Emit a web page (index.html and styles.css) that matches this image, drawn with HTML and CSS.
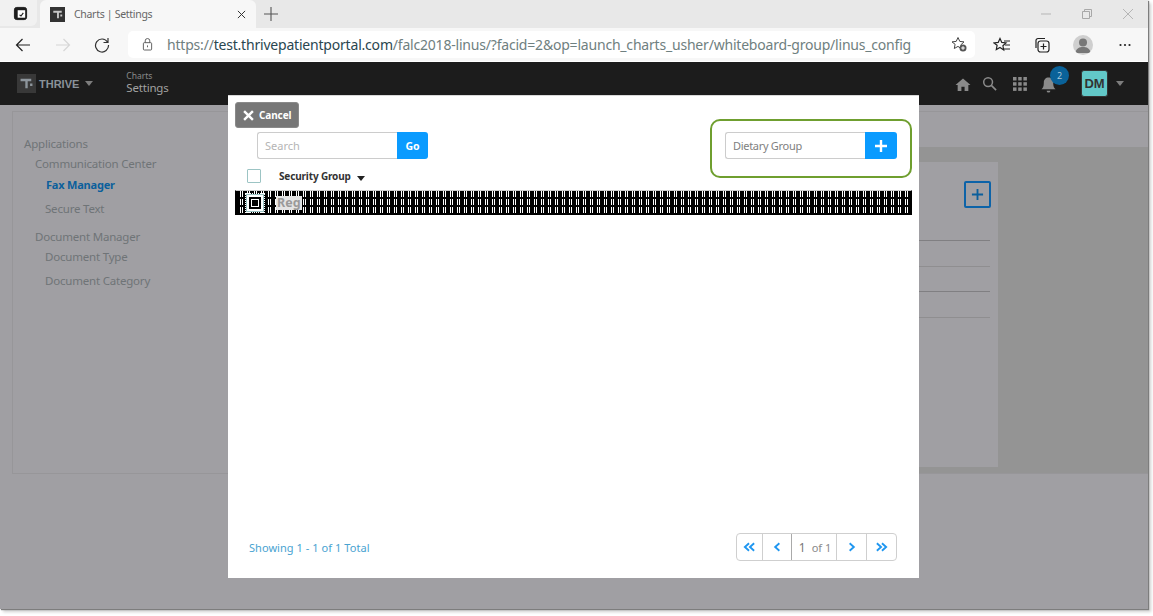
FILE: index.html
```html
<!DOCTYPE html>
<html lang="en">
<head>
<meta charset="utf-8">
<title>Charts | Settings</title>
<link rel="stylesheet" href="styles.css">
</head>
<body>
<div class="window">
  <div class="tabstrip">
    <div class="tab-side">
      <svg class="ico16" viewBox="0 0 16 16"><rect x="1.500" y="1.500" width="13" height="13" rx="2.500" fill="#1c1c1c" stroke="#1c1c1c"/><rect x="5" y="4.500" width="8" height="8" fill="#fff"/><path d="M7 9.500l1.500 1.200 2.500-3.400" fill="none" stroke="#1c1c1c" stroke-width="1.200"/></svg>
    </div>
    <div class="tab">
      <span class="favicon"><svg viewBox="0 0 16 16"><path d="M3.500 4h9v2h-3v6h-2V6h-4zM11 8h2v2h-2z" fill="#c8c8c8"/></svg></span>
      <span class="tab-title">Charts | Settings</span>
      <svg class="tab-close" viewBox="0 0 10 10"><path d="M1 1l8 8M9 1l-8 8" stroke="#333" stroke-width="1.100"/></svg>
    </div>
    <svg class="tab-new" viewBox="0 0 14 14"><path d="M7 0v14M0 7h14" stroke="#555" stroke-width="1.100"/></svg>
    <div class="win-controls">
      <svg viewBox="0 0 10 10"><path d="M0 5h10" stroke="#b5b5b5"/></svg>
      <svg viewBox="0 0 10 10"><path d="M.5 2.500h7v7h-7zM2.500 2.500v-2h7v7h-2" fill="none" stroke="#a8a8a8"/></svg>
      <svg viewBox="0 0 10 10"><path d="M0 0l10 10M10 0L0 10" stroke="#b5b5b5"/></svg>
    </div>
  </div>
  <div class="toolbar">
    <svg class="nav-ico back" viewBox="0 0 16 16"><path d="M15 8H1.500M7.500 2L1.500 8l6 6" fill="none" stroke="#222" stroke-width="1.200"/></svg>
    <svg class="nav-ico fwd" viewBox="0 0 16 16"><path d="M1 8h13.500M8.500 2l6 6-6 6" fill="none" stroke="#d6d6d6" stroke-width="1.200"/></svg>
    <svg class="nav-ico reload" viewBox="0 0 16 16"><path d="M13.500 5A6.500 6.500 0 1 0 14.500 8M14 1v4.500H9.500" fill="none" stroke="#333" stroke-width="1.200"/></svg>
    <div class="address">
      <svg class="lock" viewBox="0 0 12 14"><rect x="1.500" y="5" width="9" height="8" rx="1" fill="none" stroke="#555"/><path d="M3.500 5V3a2.500 2.500 0 0 1 5 0v2" fill="none" stroke="#555"/><path d="M6 8v2" stroke="#555"/></svg>
      <span class="url"><span class="url-dim">https://</span><span class="url-host">test.thrivepatientportal.com</span><span class="url-dim">/falc2018-linus/?facid=2&amp;op=launch_charts_usher/whiteboard-group/linus_config</span></span>
      <svg class="fav-add" viewBox="0 0 16 16"><path d="M7 1.500l1.800 3.900 4.200.5-3.100 2.900.8 4.200L7 10.400l-3.700 2.100.8-4.200L1 5.900l4.200-.5z" fill="none" stroke="#444"/><circle cx="12" cy="12" r="3.500" fill="#555"/><path d="M12 10.200v3.600M10.200 12h3.600" stroke="#fff"/></svg>
    </div>
    <div class="tool-icons">
      <svg viewBox="0 0 18 16"><path d="M7 1.500l1.800 3.900 4.200.5-3.100 2.900.8 4.200L7 10.400l-3.700 2.100.8-4.200L1 5.900l4.200-.5z" fill="none" stroke="#222" stroke-width="1.200"/><path d="M11 4h6M12 8h5M11 12h6" stroke="#222"/></svg>
      <svg viewBox="0 0 16 16"><rect x="4" y="4" width="11" height="11" rx="2.500" fill="none" stroke="#222" stroke-width="1.200"/><path d="M2 11V3.500A2 2 0 0 1 4 1.500h7M9.500 6.500v6M6.500 9.500h6" fill="none" stroke="#222" stroke-width="1.200"/></svg>
      <span class="profile"><svg viewBox="0 0 20 20"><circle cx="10" cy="7.500" r="4" fill="#777"/><path d="M2.500 18c.5-5 4-6 7.500-6s7 1 7.500 6z" fill="#777"/></svg></span>
      <svg viewBox="0 0 14 14"><circle cx="2.500" cy="7" r="1.100" fill="#222"/><circle cx="7" cy="7" r="1.100" fill="#222"/><circle cx="11.500" cy="7" r="1.100" fill="#222"/></svg>
    </div>
  </div>
  <header class="apphead">
    <div class="logo"><svg viewBox="0 0 16 16"><path d="M3 4h9v2H9v6H7V6H3zM11 8h2v2h-2z" fill="#8d959c"/></svg></div>
    <span class="brand">THRIVE</span>
    <span class="caret caret-brand"></span>
    <div class="crumbs"><span class="crumb-sm">Charts</span><span class="crumb-lg">Settings</span></div>
    <div class="head-icons">
      <svg class="hi-home" viewBox="0 0 16 16"><path d="M8 1.500L0 8.500h2.300V15h4v-4.500h3.400V15h4V8.500H16z" fill="#8a8a8a"/></svg>
      <svg class="hi-search" viewBox="0 0 16 16"><circle cx="6.500" cy="6.500" r="4.700" fill="none" stroke="#8a8a8a" stroke-width="1.600"/><path d="M10 10l5 5" stroke="#8a8a8a" stroke-width="1.800"/></svg>
      <svg class="hi-grid" viewBox="0 0 14 14"><g fill="#8a8a8a"><rect width="3.500" height="3.500"/><rect x="5.200" width="3.500" height="3.500"/><rect x="10.400" width="3.500" height="3.500"/><rect y="5.200" width="3.500" height="3.500"/><rect x="5.200" y="5.200" width="3.500" height="3.500"/><rect x="10.400" y="5.200" width="3.500" height="3.500"/><rect y="10.400" width="3.500" height="3.500"/><rect x="5.200" y="10.400" width="3.500" height="3.500"/><rect x="10.400" y="10.400" width="3.500" height="3.500"/></g></svg>
      <span class="bell">
        <svg viewBox="0 0 16 18"><path d="M8 1c-3 0-5 2.200-5 5.500 0 4-1 5.500-2.500 7h15C14 12 13 10.500 13 6.500 13 3.200 11 1 8 1zM6 15h4a2 2 0 0 1-4 0z" fill="#8a8a8a"/></svg>
        <span class="badge">2</span>
      </span>
      <span class="avatar">DM</span>
      <span class="caret caret-user"></span>
    </div>
  </header>
  <main class="backdrop">
    <div class="panel">
      <nav class="sidenav">
        <div class="nav-root">Applications</div>
        <div class="nav-group">Communication Center</div>
        <div class="nav-item nav-active">Fax Manager</div>
        <div class="nav-item">Secure Text</div>
        <div class="nav-group nav-group-second">Document Manager</div>
        <div class="nav-item">Document Type</div>
        <div class="nav-item">Document Category</div>
      </nav>
      <section class="work">
        <div class="card">
          <div class="card-top"><span class="square-add"><svg viewBox="0 0 14 14"><path d="M7 1v12M1 7h12" stroke="#0b5f9c" stroke-width="2"/></svg></span></div>
          <div class="card-row strong first"></div>
          <div class="card-row"></div>
          <div class="card-row strong third"></div>
          <div class="card-row"></div>
        </div>
      </section>
    </div>
  </main>
  <div class="modal">
    <div class="modal-top">
      <div class="modal-left">
        <button class="btn-cancel"><svg viewBox="0 0 10 10"><path d="M1 1l8 8M9 1l-8 8" stroke="#fff" stroke-width="2.200"/></svg>Cancel</button>
        <div class="search-row">
          <div class="field"><span class="placeholder">Search</span></div>
          <button class="btn-blue btn-go">Go</button>
        </div>
      </div>
      <div class="highlight">
        <div class="field"><span class="field-text">Dietary Group</span></div>
        <button class="btn-blue btn-plus"><svg viewBox="0 0 12 12"><path d="M6 0v12M0 6h12" stroke="#fff" stroke-width="2.400"/></svg></button>
      </div>
    </div>
    <div class="table-head">
      <span class="check"></span>
      <span class="col-title">Security Group</span>
      <span class="sort"></span>
    </div>
    <div class="table-row">
      <span class="row-check"><span class="row-check-inner"></span></span>
      <span class="row-text">Reg</span>
    </div>
    <div class="spacer"></div>
    <div class="modal-foot">
      <span class="showing">Showing 1 - 1 of 1 Total</span>
      <div class="pager">
        <span class="pg pg-a"><svg viewBox="0 0 14 10"><path d="M6.500 1L2 5l4.500 4M12 1L7.500 5l4.500 4" fill="none" stroke="#1e96f0" stroke-width="2"/></svg></span>
        <span class="pg pg-b"><svg viewBox="0 0 14 10"><path d="M9 1L4.500 5 9 9" fill="none" stroke="#1e96f0" stroke-width="2"/></svg></span>
        <span class="pg pg-info"><span class="pg-num">1</span><span class="pg-of">of 1</span></span>
        <span class="pg pg-d"><svg viewBox="0 0 14 10"><path d="M5 1l4.500 4L5 9" fill="none" stroke="#1e96f0" stroke-width="2"/></svg></span>
        <span class="pg pg-c"><svg viewBox="0 0 14 10"><path d="M2 1l4.500 4L2 9M7.500 1L12 5 7.500 9" fill="none" stroke="#1e96f0" stroke-width="2"/></svg></span>
      </div>
    </div>
  </div>
</div>
</body>
</html>
```

FILE: styles.css
```css
* { box-sizing: border-box; }
html, body { margin: 0; padding: 0; background: #fff; }
body { width: 1153px; height: 616px; overflow: hidden; font-family: "Noto Sans", "Liberation Sans", sans-serif; }
.window { position: relative; width: 1148px; height: 609px; display: flex; flex-direction: column; background: #a09fa3; box-shadow: 1px 1px 1px #7d7d7d, 3px 3px 3px #cfcfcf; overflow: hidden; }

/* browser chrome */
.tabstrip { height: 28px; flex: none; display: flex; align-items: center; background: #e8e8e8; }
.tab-side { width: 37px; height: 26px; align-self: flex-start; display: flex; align-items: center; justify-content: center; background: #f1f1f1; border-bottom-right-radius: 6px; padding: 0 0 0 3px; }
.ico16 { width: 15px; height: 15px; }
.tab { width: 216px; height: 28px; margin-left: 3px; display: flex; align-items: center; background: #f7f7f7; padding: 0 10px; border-radius: 6px 6px 0 0; }
.favicon { width: 15px; height: 15px; background: #333; display: block; }
.favicon svg { width: 15px; height: 15px; display: block; }
.tab-title { margin-left: 9px; font-size: 10.500px; letter-spacing: -.3px; color: #666; flex: 1; }
.tab-close { width: 9px; height: 9px; margin-right: 0; }
.tab-new { width: 14px; height: 14px; margin-left: 8px; }
.win-controls { margin-left: auto; display: flex; gap: 31px; padding-right: 15px; }
.win-controls svg { width: 10px; height: 10px; display: block; }
.toolbar { height: 34px; flex: none; display: flex; align-items: center; background: #f7f7f7; border-bottom: 1px solid #fff; }
.nav-ico { width: 16px; height: 16px; flex: none; }
.back { margin-left: 15px; }
.fwd { margin-left: 24px; }
.reload { margin-left: 23px; }
.address { width: 847px; height: 27px; margin-left: 18px; margin-top: -1px; background: #fff; border-radius: 5px; display: flex; align-items: center; padding-left: 14px; }
.lock { width: 11px; height: 13px; flex: none; }
.url { margin-left: 14px; font-size: 14px; white-space: nowrap; width: 743px; letter-spacing: -.2px; }
.url-dim { color: #6f8080; }
.url-host { color: #2a4650; }
.fav-add { width: 16px; height: 16px; margin-left: 41px; flex: none; }
.tool-icons { display: flex; align-items: center; margin-left: 18px; }
.tool-icons svg { width: 16px; height: 16px; display: block; }
.tool-icons > svg:nth-child(1) { width: 18px; }
.tool-icons > svg:nth-child(2) { margin-left: 23px; }
.profile { width: 20px; height: 20px; border-radius: 50%; background: #cfcfcf; margin-left: 23px; overflow: hidden; }
.profile svg { width: 20px; height: 20px; }
.tool-icons > svg:nth-child(4) { width: 14px; height: 14px; margin-left: 25px; }

/* app header */
.apphead { height: 43px; flex: none; display: flex; align-items: center; background: #1c1c1c; padding-left: 17px; }
.logo { width: 19px; height: 19px; background: #383838; }
.logo svg { width: 19px; height: 19px; display: block; }
.brand { margin-left: 3px; font-size: 11px; font-weight: 700; color: #8a9299; font-family: "Liberation Sans", sans-serif; }
.caret { width: 0; height: 0; border-left: 4.500px solid transparent; border-right: 4.500px solid transparent; border-top: 5px solid #7d7d7d; }
.caret-brand { margin-left: 6px; }
.crumbs { display: flex; flex-direction: column; margin-left: 33px; margin-bottom: 1px; }
.crumb-sm { font-size: 8.500px; line-height: 10px; color: #8a8a8a; }
.crumb-lg { font-size: 11.500px; letter-spacing: -.2px; line-height: 14px; color: #a2a2a2; }
.head-icons { margin-left: auto; display: flex; align-items: center; padding-right: 24px; }
.hi-home { width: 16px; height: 15px; margin-top: 2px; }
.hi-search { width: 15px; height: 15px; margin-left: 11px; }
.hi-grid { width: 14px; height: 14px; margin-left: 16px; }
.bell { position: relative; width: 15px; height: 18px; margin-left: 14px; margin-top: 2px; }
.bell svg { width: 15px; height: 18px; display: block; }
.badge { position: absolute; left: 9px; top: -10px; width: 19px; height: 19px; border-radius: 50%; background: #0a6299; color: #a7c5d8; font-size: 9px; line-height: 19px; text-align: center; }
.avatar { width: 27px; height: 27px; margin-left: 25px; background: #62c8c8; border: 1px solid #333; border-radius: 3px; color: #333; font-size: 13px; font-weight: 700; line-height: 25px; text-align: center; font-family: "Liberation Sans", sans-serif; }
.caret-user { margin-left: 8px; }

/* dimmed page */
.backdrop { flex: 1; padding: 6px 0 0 12px; background: #a09fa3; }
.panel { height: 363px; display: flex; border: 1px solid #979699; border-right: 0; }
.sidenav { width: 215px; flex: none; padding-top: 23px; color: #6f7477; font-size: 11.500px; letter-spacing: -.2px; }
.nav-root { margin-left: 11px; line-height: 18px; }
.nav-group { margin-left: 22px; line-height: 18px; margin-top: 2px; }
.nav-group-second { margin-top: 10px; }
.nav-item { margin-left: 32px; line-height: 18px; margin-top: 3px; }
.nav-item + .nav-item { margin-top: 6px; }
.nav-group-second + .nav-item { margin-top: 2px; }
.nav-active { margin-left: 33px; color: #0b5f9c; font-weight: 700; font-size: 11px; }
.work { flex: 1; margin-top: 35px; background: #949494; padding: 15px 150px 6px 0; display: flex; }
.card { flex: 1; background: #a09fa3; padding-right: 8px; }
.card-top { height: 46px; padding-top: 19px; display: flex; justify-content: flex-end; margin-right: -1px; }
.square-add { width: 27px; height: 27px; flex: none; border: 2px solid #0d63a8; border-radius: 2px; display: flex; align-items: center; justify-content: center; }
.square-add svg { width: 13px; height: 13px; }
.card-row { height: 26px; border-bottom: 1px solid #8f8e90; }
.card-row.strong { border-bottom-color: #807f82; }
.card-row.first { height: 33px; }
.card-row.third { height: 25px; }

/* modal */
.modal { position: absolute; left: 228px; top: 95px; width: 691px; height: 483px; display: flex; flex-direction: column; background: #fff; padding: 7px 7px 17px; border-top: 1px solid #d8d8d8; }
.modal-top { height: 57px; flex: none; display: flex; justify-content: space-between; align-items: flex-start; margin-top: -1px; }
.modal-left { display: flex; flex-direction: column; }
.btn-cancel { width: 64px; height: 26px; display: flex; align-items: center; padding: 0 0 0 7px; gap: 5px; border: 1px solid #8a8a8a; border-radius: 3px; background: #777; color: #fff; font-family: inherit; font-size: 10px; letter-spacing: -.1px; font-weight: 700; }
.btn-cancel svg { width: 11px; height: 11px; }
.search-row { display: flex; margin: 4px 0 0 22px; }
.field { width: 140px; height: 27px; border: 1px solid #ccc; border-right: 0; border-radius: 3px 0 0 3px; padding-left: 7px; font-size: 11px; line-height: 25px; background: #fff; }
.placeholder { color: #b5b5b5; }
.field-text { color: #808080; letter-spacing: -.3px; }
.btn-blue { height: 27px; border: 0; border-radius: 0 3px 3px 0; background: #0a9bff; color: #fff; padding: 0; display: flex; align-items: center; justify-content: center; font-family: inherit; }
.btn-go { width: 31px; font-size: 10.500px; font-weight: 700; }
.btn-plus { width: 32px; }
.btn-plus svg { width: 12px; height: 12px; }
.highlight { width: 202px; height: 59px; margin-top: 17px; flex: none; display: flex; padding: 11px 13px; border: 2px solid #6f9f2f; border-radius: 10px; background: #fff; }
.table-head { height: 14px; flex: none; display: flex; align-items: center; margin-top: 10px; padding-left: 12px; }
.check { width: 14px; height: 14px; border: 1px solid #9cc4c4; border-radius: 1px; flex: none; }
.col-title { margin-left: 18px; font-size: 10px; letter-spacing: -.15px; font-weight: 700; color: #333; }
.sort { width: 0; height: 0; margin-left: 6px; margin-top: 5px; border-left: 4.500px solid transparent; border-right: 4.500px solid transparent; border-top: 5px solid #222; }
.table-row { height: 25px; flex: none; margin-top: 7px; display: flex; align-items: center; border: 1px solid #000; border-top: 1px solid #ccc; background-color: #000; background-image: repeating-linear-gradient(0deg, #000 0 1px, transparent 1px 7px, #000 7px 8px), repeating-linear-gradient(90deg, #000 0 4px, #fff 4px 5px, #000 5px 6px, #fff 6px 7px); }
.row-check { width: 18px; height: 18px; margin-left: 10px; background: #fff; border: 1px solid #9cc4c4; outline: 1px dotted #fff; display: flex; align-items: center; justify-content: center; flex: none; }
.row-check-inner { width: 12px; height: 12px; background: #000; box-shadow: inset 0 0 0 2px #000, inset 0 0 0 3px #fff; }
.row-text { margin-left: 12px; font-size: 12.500px; font-weight: 700; color: #9a9a9a; background: #e4e4e4; line-height: 14px; padding: 0 1px; }
.spacer { flex: 1; }
.modal-foot { height: 28px; flex: none; display: flex; align-items: center; justify-content: space-between; padding: 0 15px 0 14px; }
.showing { font-size: 11px; letter-spacing: .05px; color: #49a3d1; }
.pager { display: flex; height: 28px; border: 1px solid #cfcfcf; border-radius: 4px; }
.pg { display: flex; align-items: center; justify-content: center; height: 26px; border-right: 1px solid #cfcfcf; }
.pg:last-child { border-right: 0; }
.pg svg { width: 13px; height: 10px; }
.pg-a { width: 26px; }
.pg-b { width: 29px; border-right-color: #aaa; }
.pg-d { width: 30px; }
.pg-c { width: 29px; }
.pg-info { width: 45px; color: #8a8a8a; font-size: 11px; gap: 6px; padding-left: 2px; }
.pg-num { font-size: 12px; color: #777; }
```
